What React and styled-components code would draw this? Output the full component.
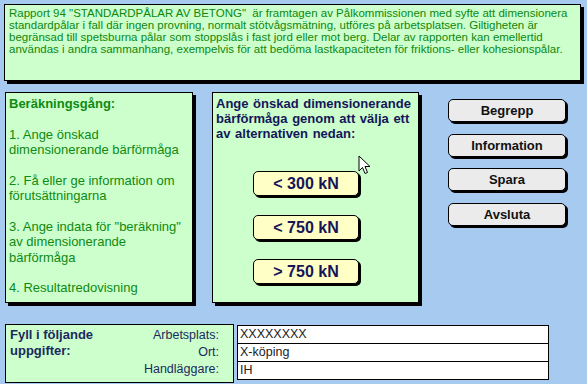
import React from 'react';
import styled, { createGlobalStyle } from 'styled-components';

const GlobalStyle = createGlobalStyle`
  body {
    margin: 0;
    background: #a6caf0;
    font-family: "Liberation Sans", Arial, sans-serif;
  }
`;

const Page = styled.div`
  width: 587px;
  height: 384px;
  padding: 4px 0 0 4px;
  box-sizing: border-box;
  overflow: hidden;
`;

const Panel = styled.div`
  background: #ccffcc;
  border: 1px solid #000;
  box-shadow: 3px 3px 0 #000;
  box-sizing: border-box;
`;

const InfoBox = styled(Panel)`
  width: 577px;
  height: 77px;
  padding: 2px 4px;
  font-size: 11.5px;
  line-height: 12px;
  color: #0c880f;
`;

const MainRow = styled.div`
  display: flex;
  align-items: flex-start;
  margin-top: 11px;
`;

const StepsPanel = styled(Panel)`
  width: 188px;
  height: 211px;
  margin-left: 1px;
  padding: 3px 3px;
  color: #0e8a12;
  font-size: 13px;
  line-height: 15.5px;
`;

const StepsTitle = styled.div`
  font-weight: bold;
  margin-bottom: 15px;
`;

const Step = styled.p`
  margin: 0 0 15px;
`;

const ChoicePanel = styled(Panel)`
  position: relative;
  width: 207px;
  height: 211px;
  margin-left: 19px;
  padding: 3px 3px;
  color: #15155a;
`;

const ChoiceHeading = styled.div`
  font-size: 13px;
  font-weight: bold;
  line-height: 15px;
  word-spacing: 1px;
`;

const ChoiceList = styled.div`
  display: flex;
  flex-direction: column;
  gap: 19px;
  margin: 30px 0 0 37px;
`;

const ChoiceButton = styled.button`
  width: 106px;
  height: 25px;
  background: #ffffc6;
  border: 1px solid #000;
  border-radius: 5px;
  box-shadow: 2px 2px 0 #000;
  font-family: inherit;
  font-size: 16px;
  font-weight: bold;
  color: #15155a;
  padding: 0;
`;

const Cursor = styled.svg`
  position: absolute;
  left: 145px;
  top: 62px;
`;

const ButtonColumn = styled.div`
  display: flex;
  flex-direction: column;
  gap: 11.5px;
  margin: 7px 0 0 29px;
`;

const MenuButton = styled.button`
  width: 118px;
  height: 23px;
  background: #ebebeb;
  border: 1px solid #000;
  border-radius: 5px;
  box-shadow: 2px 2px 0 #000;
  font-family: inherit;
  font-size: 13px;
  font-weight: bold;
  color: #111;
  padding: 0;
`;

const BottomRow = styled.div`
  display: flex;
  align-items: flex-start;
  margin-top: 21px;
`;

const FormPanel = styled.div`
  display: flex;
  justify-content: space-between;
  width: 229px;
  height: 59px;
  margin-left: 1px;
  box-sizing: border-box;
  background: #ccffcc;
  border: 1px solid #000;
  padding: 2px 14px 0 4px;
`;

const FormTitle = styled.div`
  font-size: 13px;
  font-weight: bold;
  line-height: 16px;
  color: #1b2a5e;
`;

const Labels = styled.div`
  text-align: right;
  font-size: 12.5px;
  line-height: 17px;
  color: #1b2a5e;
`;

const ValueTable = styled.div`
  width: 310px;
  margin: 1px 0 0 3px;
  border: 1px solid #000;
  background: #fff;
`;

const ValueRow = styled.div`
  height: 17px;
  line-height: 17px;
  padding-left: 2px;
  font-size: 12.5px;
  color: #222;
  border-top: ${p => (p.first ? 'none' : '1px solid #000')};
`;

const steps = [
  ['1. Ange önskad', 'dimensionerande  bärförmåga'],
  ['2. Få eller ge information om', 'förutsättningarna'],
  ['3. Ange indata för "beräkning"', 'av dimensionerande', 'bärförmåga'],
  ['4. Resultatredovisning'],
];

const choices = ['< 300 kN', '< 750 kN', '> 750 kN'];
const menu = ['Begrepp', 'Information', 'Spara', 'Avsluta'];
const fields = [
  ['Arbetsplats:', 'XXXXXXXX'],
  ['Ort:', 'X-köping'],
  ['Handläggare:', 'IH'],
];

export default function App() {
  return (
    <Page>
      <GlobalStyle />
      <InfoBox>
        Rapport 94 "STANDARDPÅLAR AV BETONG"&nbsp; är framtagen av Pålkommissionen med syfte att dimensionera<br />
        standardpålar i fall där ingen provning, normalt stötvågsmätning, utföres på arbetsplatsen. Giltigheten är<br />
        begränsad till spetsburna pålar som stoppslås i fast jord eller mot berg. Delar av rapporten kan emellertid<br />
        användas i andra sammanhang, exempelvis för att bedöma lastkapaciteten för friktions- eller kohesionspålar.
      </InfoBox>

      <MainRow>
        <StepsPanel>
          <StepsTitle>Beräkningsgång:</StepsTitle>
          {steps.map((lines, i) => (
            <Step key={i}>
              {lines.map((l, j) => (
                <React.Fragment key={j}>
                  {j > 0 && <br />}
                  {l}
                </React.Fragment>
              ))}
            </Step>
          ))}
        </StepsPanel>

        <ChoicePanel>
          <ChoiceHeading>
            Ange önskad dimensionerande<br />
            bärförmåga genom att välja ett<br />
            av alternativen nedan:
          </ChoiceHeading>
          <ChoiceList>
            {choices.map(c => (
              <ChoiceButton key={c}>{c}</ChoiceButton>
            ))}
          </ChoiceList>
          <Cursor width="13" height="20" viewBox="0 0 13 20">
            <path
              d="M1 1 L1 16 L4.5 12.5 L7 18.5 L9.5 17.5 L7 11.5 L12 11.5 Z"
              fill="#fff"
              stroke="#000"
              strokeWidth="1"
              strokeLinejoin="round"
            />
          </Cursor>
        </ChoicePanel>

        <ButtonColumn>
          {menu.map(m => (
            <MenuButton key={m}>{m}</MenuButton>
          ))}
        </ButtonColumn>
      </MainRow>

      <BottomRow>
        <FormPanel>
          <FormTitle>
            Fyll i följande<br />
            uppgifter:
          </FormTitle>
          <Labels>
            {fields.map(([label]) => (
              <div key={label}>{label}</div>
            ))}
          </Labels>
        </FormPanel>
        <ValueTable>
          {fields.map(([label, value], i) => (
            <ValueRow key={label} first={i === 0}>
              {value}
            </ValueRow>
          ))}
        </ValueTable>
      </BottomRow>
    </Page>
  );
}
